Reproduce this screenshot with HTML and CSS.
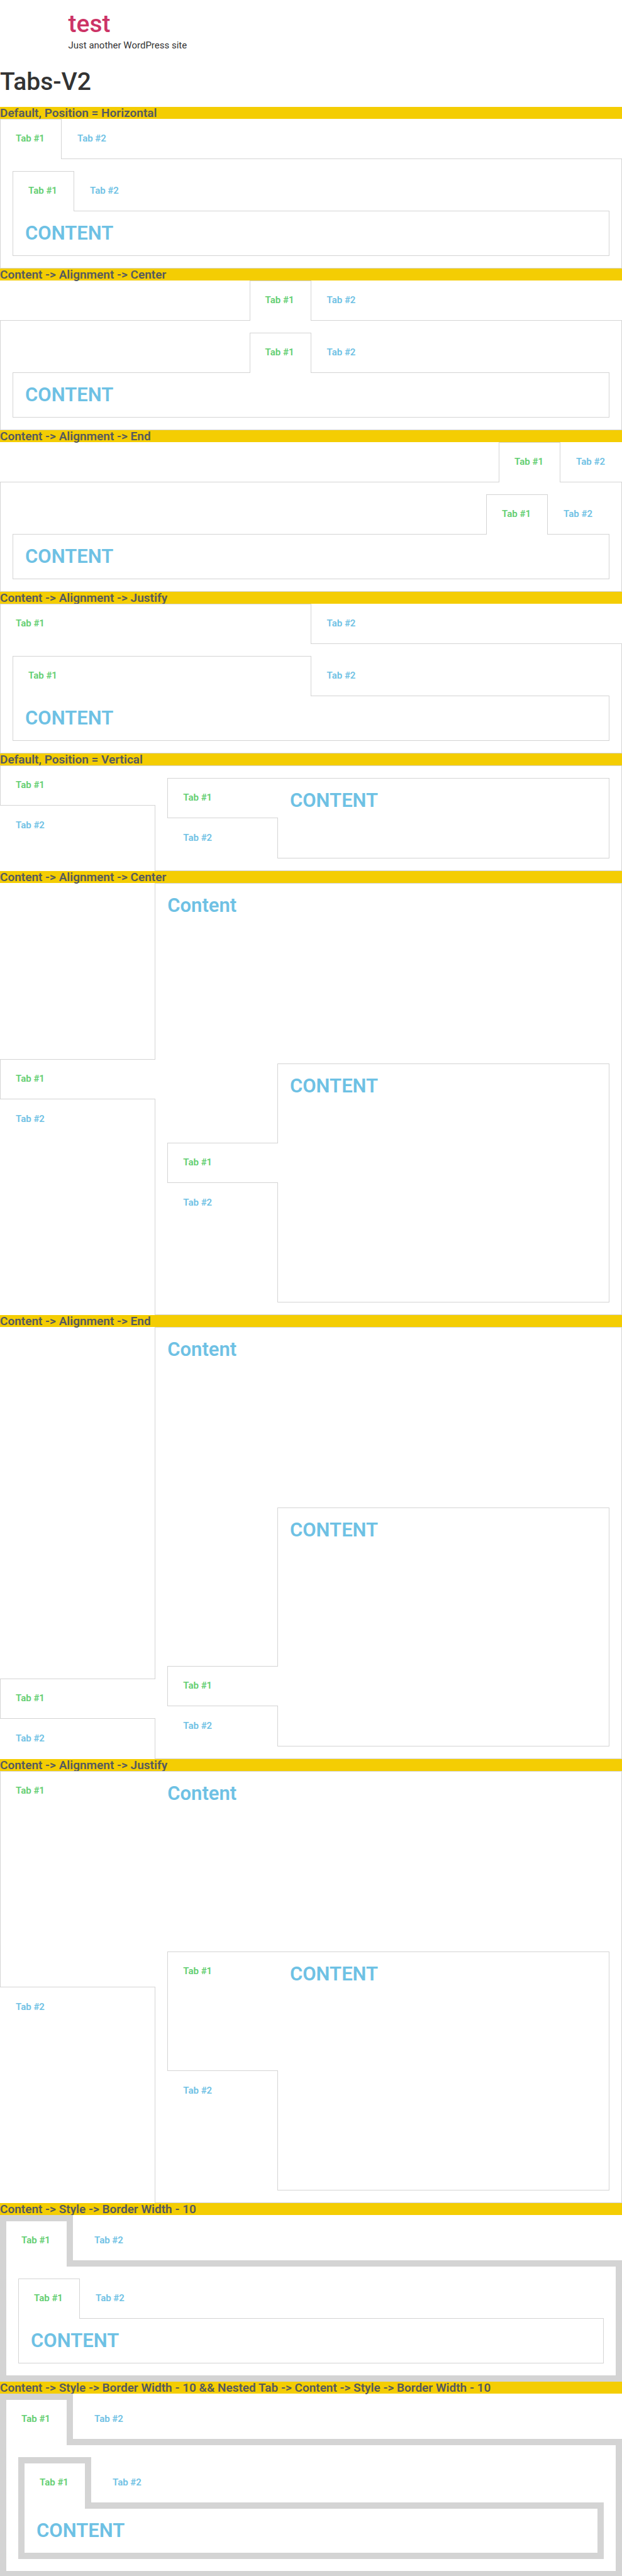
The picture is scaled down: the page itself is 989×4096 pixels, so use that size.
FILE: index.html
```html
<!DOCTYPE html>
<html lang="en">
<head>
<meta charset="utf-8">
<meta name="viewport" content="width=device-width, initial-scale=1">
<title>Tabs-V2</title>
<link rel="stylesheet" href="styles.css">
</head>
<body>
<header class="site-header">
  <p class="site-title"><a href="#">test</a></p>
  <p class="site-tagline">Just another WordPress site</p>
</header>
<main>
  <h1 class="page-title">Tabs-V2</h1>

  <h2 class="label">Default, Position = Horizontal</h2>
  <section class="tabs">
    <div class="tab-list" role="tablist"><button class="tab active" role="tab" aria-selected="true">Tab #1</button><button class="tab" role="tab">Tab #2</button></div>
    <div class="panel" role="tabpanel">
      <div class="tabs">
        <div class="tab-list" role="tablist"><button class="tab active" role="tab" aria-selected="true">Tab #1</button><button class="tab" role="tab">Tab #2</button></div>
        <div class="panel" role="tabpanel"><h3 class="content">CONTENT</h3></div>
      </div>
    </div>
  </section>

  <h2 class="label">Content -&gt; Alignment -&gt; Center</h2>
  <section class="tabs align-center">
    <div class="tab-list" role="tablist"><button class="tab active" role="tab" aria-selected="true">Tab #1</button><button class="tab" role="tab">Tab #2</button></div>
    <div class="panel" role="tabpanel">
      <div class="tabs align-center">
        <div class="tab-list" role="tablist"><button class="tab active" role="tab" aria-selected="true">Tab #1</button><button class="tab" role="tab">Tab #2</button></div>
        <div class="panel" role="tabpanel"><h3 class="content">CONTENT</h3></div>
      </div>
    </div>
  </section>

  <h2 class="label">Content -&gt; Alignment -&gt; End</h2>
  <section class="tabs align-end">
    <div class="tab-list" role="tablist"><button class="tab active" role="tab" aria-selected="true">Tab #1</button><button class="tab" role="tab">Tab #2</button></div>
    <div class="panel" role="tabpanel">
      <div class="tabs align-end">
        <div class="tab-list" role="tablist"><button class="tab active" role="tab" aria-selected="true">Tab #1</button><button class="tab" role="tab">Tab #2</button></div>
        <div class="panel" role="tabpanel"><h3 class="content">CONTENT</h3></div>
      </div>
    </div>
  </section>

  <h2 class="label">Content -&gt; Alignment -&gt; Justify</h2>
  <section class="tabs align-justify">
    <div class="tab-list" role="tablist"><button class="tab active" role="tab" aria-selected="true">Tab #1</button><button class="tab" role="tab">Tab #2</button></div>
    <div class="panel" role="tabpanel">
      <div class="tabs align-justify">
        <div class="tab-list" role="tablist"><button class="tab active" role="tab" aria-selected="true">Tab #1</button><button class="tab" role="tab">Tab #2</button></div>
        <div class="panel" role="tabpanel"><h3 class="content">CONTENT</h3></div>
      </div>
    </div>
  </section>

  <h2 class="label">Default, Position = Vertical</h2>
  <section class="tabs vertical">
    <div class="tab-list" role="tablist"><button class="tab active" role="tab" aria-selected="true">Tab #1</button><button class="tab" role="tab">Tab #2</button></div>
    <div class="panel" role="tabpanel">
      <div class="tabs vertical">
        <div class="tab-list" role="tablist"><button class="tab active" role="tab" aria-selected="true">Tab #1</button><button class="tab" role="tab">Tab #2</button></div>
        <div class="panel" role="tabpanel"><h3 class="content">CONTENT</h3></div>
      </div>
    </div>
  </section>

  <h2 class="label">Content -&gt; Alignment -&gt; Center</h2>
  <section class="tabs vertical align-center">
    <div class="tab-list" role="tablist"><button class="tab active" role="tab" aria-selected="true">Tab #1</button><button class="tab" role="tab">Tab #2</button></div>
    <div class="panel roomy" role="tabpanel">
      <h3 class="content">Content</h3>
      <div class="tabs vertical align-center tall">
        <div class="tab-list" role="tablist"><button class="tab active" role="tab" aria-selected="true">Tab #1</button><button class="tab" role="tab">Tab #2</button></div>
        <div class="panel" role="tabpanel"><h3 class="content">CONTENT</h3></div>
      </div>
    </div>
  </section>

  <h2 class="label">Content -&gt; Alignment -&gt; End</h2>
  <section class="tabs vertical align-end">
    <div class="tab-list" role="tablist"><button class="tab active" role="tab" aria-selected="true">Tab #1</button><button class="tab" role="tab">Tab #2</button></div>
    <div class="panel roomy" role="tabpanel">
      <h3 class="content">Content</h3>
      <div class="tabs vertical align-end tall">
        <div class="tab-list" role="tablist"><button class="tab active" role="tab" aria-selected="true">Tab #1</button><button class="tab" role="tab">Tab #2</button></div>
        <div class="panel" role="tabpanel"><h3 class="content">CONTENT</h3></div>
      </div>
    </div>
  </section>

  <h2 class="label">Content -&gt; Alignment -&gt; Justify</h2>
  <section class="tabs vertical align-justify">
    <div class="tab-list" role="tablist"><button class="tab active" role="tab" aria-selected="true">Tab #1</button><button class="tab" role="tab">Tab #2</button></div>
    <div class="panel roomy" role="tabpanel">
      <h3 class="content">Content</h3>
      <div class="tabs vertical align-justify tall">
        <div class="tab-list" role="tablist"><button class="tab active" role="tab" aria-selected="true">Tab #1</button><button class="tab" role="tab">Tab #2</button></div>
        <div class="panel" role="tabpanel"><h3 class="content">CONTENT</h3></div>
      </div>
    </div>
  </section>

  <h2 class="label">Content -&gt; Style -&gt; Border Width - 10</h2>
  <section class="tabs thick">
    <div class="tab-list" role="tablist"><button class="tab active" role="tab" aria-selected="true">Tab #1</button><button class="tab" role="tab">Tab #2</button></div>
    <div class="panel" role="tabpanel">
      <div class="tabs">
        <div class="tab-list" role="tablist"><button class="tab active" role="tab" aria-selected="true">Tab #1</button><button class="tab" role="tab">Tab #2</button></div>
        <div class="panel" role="tabpanel"><h3 class="content">CONTENT</h3></div>
      </div>
    </div>
  </section>

  <h2 class="label">Content -&gt; Style -&gt; Border Width - 10 &amp;&amp; Nested Tab -&gt; Content -&gt; Style -&gt; Border Width - 10</h2>
  <section class="tabs thick">
    <div class="tab-list" role="tablist"><button class="tab active" role="tab" aria-selected="true">Tab #1</button><button class="tab" role="tab">Tab #2</button></div>
    <div class="panel" role="tabpanel">
      <div class="tabs thick">
        <div class="tab-list" role="tablist"><button class="tab active" role="tab" aria-selected="true">Tab #1</button><button class="tab" role="tab">Tab #2</button></div>
        <div class="panel" role="tabpanel"><h3 class="content">CONTENT</h3></div>
      </div>
    </div>
  </section>
</main>
</body>
</html>
```
FILE: styles.css
```css
* {
  box-sizing: border-box;
}

body {
  margin: 0;
  background: #fff;
  color: #333;
  font-family: Roboto, "Liberation Sans", sans-serif;
  font-size: 15px;
  line-height: 23px;
}

h1, h2, h3, p {
  margin: 0;
}

.site-header {
  max-width: 772px;
  margin: 0 auto;
  padding: 15px 0 23px;
}

.site-title,
.page-title {
  font-size: 39px;
  font-weight: 500;
  line-height: 46px;
}

.site-title a {
  color: #cc3366;
  text-decoration: none;
}

.page-title {
  padding-bottom: 17px;
}

.label {
  background: #f4cd03;
  color: #54595f;
  font-size: 19px;
  font-weight: 600;
  line-height: 19px;
}

/* Tabs: --edge is the border width shared by the active tab and its panel */
.tabs {
  --edge: 1px;
  display: flex;
  flex-direction: column;
}

.thick {
  --edge: 10px;
}

.tab-list {
  display: flex;
  margin-bottom: calc(-1 * var(--edge));
}

.tab {
  display: flex;
  align-items: flex-start;
  margin: 0;
  padding: 23px 26px 24px 24px;
  border: var(--edge) solid transparent;
  background: none;
  color: #6ec1e4;
  font: 600 15px/15px Roboto, "Liberation Sans", sans-serif;
  text-align: left;
  cursor: pointer;
}

.thick > .tab-list > .tab {
  padding-top: 23px;
}

.active {
  position: relative;
  z-index: 1;
  border-color: #d4d4d4;
  background: #fff;
  color: #61ce70;
}

/* The active tab stays open on the side where it meets the panel */
.tabs:not(.vertical) > .tab-list > .active {
  border-bottom: 0;
}

.panel {
  padding: 19px;
  border: var(--edge) solid #d4d4d4;
}

.content {
  color: #6ec1e4;
  font-size: 31px;
  font-weight: 600;
  line-height: 32px;
}

.align-center > .tab-list {
  justify-content: center;
}

.align-end > .tab-list {
  justify-content: flex-end;
}

.align-justify > .tab-list > .tab {
  flex: 1;
}

.vertical {
  flex-direction: row;
}

.vertical > .tab-list {
  flex: 0 0 25%;
  flex-direction: column;
  margin: 0 calc(-1 * var(--edge)) 0 0;
}

.vertical > .tab-list > .active {
  border-right: 0;
}

.vertical > .panel {
  flex: 1;
}

.roomy {
  display: flex;
  flex-direction: column;
  gap: 235px;
}

.tall {
  min-height: 380px;
}
```
